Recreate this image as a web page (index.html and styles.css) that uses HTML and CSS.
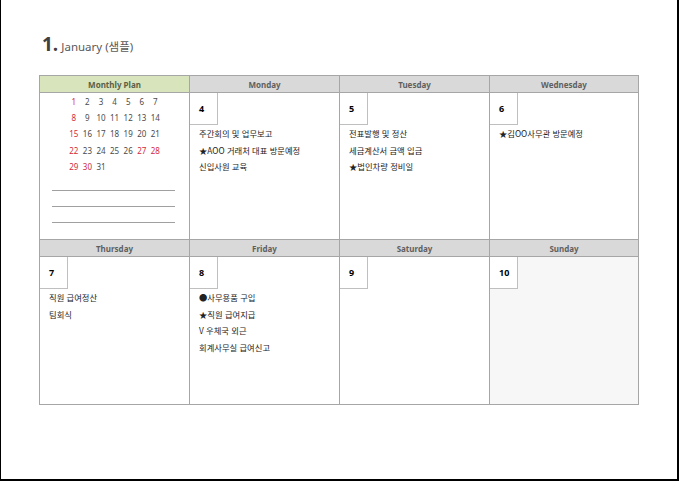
FILE: index.html
```html
<!DOCTYPE html>
<html lang="ko">
<head>
<meta charset="utf-8">
<link rel="stylesheet" href="styles.css">
</head>
<body>
<div class="frame">
  <h1 class="title"><span class="num">1.</span><span class="month">January (샘플)</span></h1>
  <div class="cal">
    <div class="hd plan">Monthly Plan</div>
    <div class="hd">Monday</div>
    <div class="hd">Tuesday</div>
    <div class="hd">Wednesday</div>

    <div class="cell mini">
      <div class="days">
        <span class="r">1</span><span>2</span><span>3</span><span>4</span><span>5</span><span>6</span><span>7</span>
        <span class="r">8</span><span>9</span><span>10</span><span>11</span><span>12</span><span>13</span><span>14</span>
        <span class="r">15</span><span>16</span><span>17</span><span>18</span><span>19</span><span>20</span><span>21</span>
        <span class="r">22</span><span>23</span><span>24</span><span>25</span><span>26</span><span class="r">27</span><span class="r">28</span>
        <span class="r">29</span><span class="r">30</span><span>31</span>
      </div>
      <div class="lines"><i></i><i></i><i></i></div>
    </div>
    <div class="cell">
      <div class="date">4</div>
      <ul class="ev"><li>주간회의 및 업무보고</li><li>★AOO 거래처 대표 방문예정</li><li>신입사원 교육</li></ul>
    </div>
    <div class="cell">
      <div class="date">5</div>
      <ul class="ev"><li>전표발행 및 정산</li><li>세금계산서 금액 입금</li><li>★법인차량 정비일</li></ul>
    </div>
    <div class="cell">
      <div class="date">6</div>
      <ul class="ev"><li>★김OO사무관 방문예정</li></ul>
    </div>

    <div class="hd">Thursday</div>
    <div class="hd">Friday</div>
    <div class="hd">Saturday</div>
    <div class="hd">Sunday</div>

    <div class="cell">
      <div class="date">7</div>
      <ul class="ev"><li>직원 급여정산</li><li>팀회식</li></ul>
    </div>
    <div class="cell">
      <div class="date">8</div>
      <ul class="ev"><li>●사무용품 구입</li><li>★직원 급여지급</li><li>V 우체국 외근</li><li>회계사무실 급여신고</li></ul>
    </div>
    <div class="cell">
      <div class="date">9</div>
    </div>
    <div class="cell sun">
      <div class="date">10</div>
    </div>
  </div>
</div>
</body>
</html>
```

FILE: styles.css
```css
* { box-sizing: border-box; }
html, body { margin: 0; padding: 0; background: #fff; }
body {
  font-family: "Noto Sans", "Noto Sans CJK KR", sans-serif;
  color: #222;
}
.frame {
  width: 679px;
  height: 481px;
  border-left: 1px solid #000;
  border-right: 2px solid #000;
  border-bottom: 2px solid #000;
  padding: 31px 0 0 38px;
}
.title {
  margin: 0;
  height: 44px;
  display: flex;
  align-items: baseline;
  font-weight: normal;
}
.title .num {
  font-family: "Open Sans", "Noto Sans", sans-serif;
  font-weight: 700;
  font-size: 19px;
  color: #404040;
  margin-left: 3px;
  margin-right: 3px;
}
.title .month {
  font-family: "Noto Sans", "Noto Sans CJK KR", sans-serif;
  font-size: 11.5px;
  color: #595959;
}
.cal {
  width: 600px;
  display: grid;
  grid-template-columns: 150px 150px 150px 149px;
  grid-template-rows: 17px 147px 17px 148px;
  border-left: 1px solid #a6a6a6;
  border-top: 1px solid #a6a6a6;
}
.hd {
  background: #d9d9d9;
  border-right: 1px solid #a6a6a6;
  border-bottom: 1px solid #a6a6a6;
  font-size: 8px;
  font-weight: 700;
  color: #5f5f5f;
  display: flex;
  align-items: center;
  justify-content: center;
}
.hd.plan { background: #d8e4bc; color: #5a6048; }
.cell {
  border-right: 1px solid #a6a6a6;
  border-bottom: 1px solid #a6a6a6;
  background: #fff;
}
.cell.sun { background: #f7f7f7; }
.date {
  width: 28px;
  height: 32px;
  border-right: 1px solid #bfbfbf;
  border-bottom: 1px solid #bfbfbf;
  background: #fff;
  font-size: 9px;
  font-weight: 700;
  color: #000;
  display: flex;
  align-items: center;
  padding-left: 9px;
}
.ev {
  list-style: none;
  margin: 0;
  padding: 0 0 0 9px;
  font-family: "Noto Sans CJK KR", sans-serif;
  font-size: 8.3px;
  line-height: 16.5px;
  color: #222;
}
.mini { padding: 0 0 0 27px; }
.days {
  display: grid;
  grid-template-columns: repeat(7, 13.6px);
  grid-auto-rows: 16.3px;
  font-size: 8px;
  color: #4a4a4a;
}
.days span { display: flex; align-items: center; justify-content: center; }
.days .r { color: #d42a3a; }
.lines {
  margin: 16px 0 0 -15px;
  width: 123px;
  display: flex;
  flex-direction: column;
  gap: 15px;
}
.lines i { display: block; height: 1px; background: #a0a0a0; }
```
